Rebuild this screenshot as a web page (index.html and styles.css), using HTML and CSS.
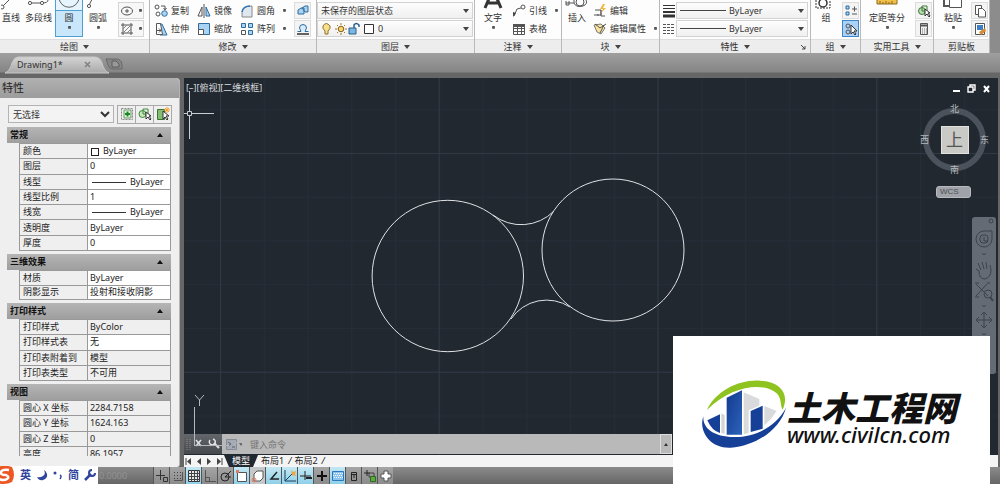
FILE: index.html
```html
<!DOCTYPE html>
<html lang="zh-CN">
<head>
<meta charset="utf-8">
<title>Drawing1</title>
<link rel="stylesheet" href="styles.css">
</head>
<body>
<div class="app">
  <header class="ribbon">
    <section class="panel panel-draw">
      <div class="panel-body">
        <button class="big big-narrow"><svg width="20" height="11" viewBox="0 0 20 11"><path d="M1 7 8 0" class="ln"/><circle cx="1" cy="7" r="2" class="nd"/></svg><span>直线</span><i></i></button>
        <button class="big big-wide"><svg width="26" height="11" viewBox="0 0 26 11"><path d="M4 3h12q6 0 6-3" class="ln"/><circle cx="4" cy="3" r="1.6" class="nd"/><circle cx="16" cy="3" r="1.6" class="nd"/></svg><span>多段线</span><i></i></button>
        <button class="big big-on"><svg width="26" height="11" viewBox="0 0 26 11"><circle cx="13" cy="-3" r="11" class="ln"/></svg><span>圆</span><i class="caret"></i></button>
        <button class="big"><svg width="26" height="11" viewBox="0 0 26 11"><path d="M4 6Q5 2 8-2" class="ln"/><circle cx="4" cy="6" r="1.6" class="nd"/></svg><span>圆弧</span><i class="caret"></i></button>
        <div class="stack stack-draw">
          <button class="split"><svg width="14" height="14" viewBox="0 0 14 14"><ellipse cx="7" cy="7" rx="5.500" ry="4" class="ln"/><path d="M5 7h4M7 5v4" class="ln"/></svg><i class="caret"></i></button>
          <button class="split"><svg width="14" height="14" viewBox="0 0 14 14"><path d="M3 1v12M11 1v12M1 3h12M1 11h12" class="ln"/><path d="M3 7l4-4M3 11l8-8M7 11l4-4" stroke="#888" fill="none"/></svg><i class="caret"></i></button>
        </div>
      </div>
      <h2 class="panel-title">绘图<i class="drop"></i></h2>
    </section>

    <section class="panel panel-modify">
      <div class="panel-body">
        <div class="stack">
          <button class="tool"><svg width="14" height="14" viewBox="0 0 14 14"><circle cx="3" cy="3" r="2" class="ln"/><circle cx="4" cy="10" r="2" class="ln"/><circle cx="10.500" cy="9.500" r="2.800" class="bl"/><path d="M7 2h4v3M9.500 4 11 6l1.500-2" class="ln"/></svg>复制</button>
          <button class="tool"><svg width="14" height="14" viewBox="0 0 14 14"><path d="M6 2h2l5 11H6z" class="bl"/><path d="M2.500 1.500h4l2 11h-6z" fill="#fff" stroke="#555"/><path d="M3 8.500h4M5 6.500l2 2-2 2" class="ln"/></svg>拉伸</button>
        </div>
        <div class="stack">
          <button class="tool"><svg width="14" height="14" viewBox="0 0 14 14"><path d="M5 3v9H1z" fill="#fff" stroke="#555"/><path d="M9 3v9h4z" class="bl"/><path d="M7 0v14" class="ln"/></svg>镜像</button>
          <button class="tool"><svg width="14" height="14" viewBox="0 0 14 14"><path d="M1.500 1.500h11v11h-11z" class="bl"/><path d="M1.500 7.500h5v5h-5z" fill="#fff" stroke="#555"/></svg>缩放</button>
        </div>
        <div class="stack">
          <button class="tool"><svg width="14" height="14" viewBox="0 0 14 14"><path d="M2 13V8q1-6 10-6v11z" fill="#dfe7ef" stroke="#888"/><path d="M2 8q1-6 8-6" stroke="#2f78b8" fill="none" stroke-width="1.500"/></svg>圆角<i class="caret"></i></button>
          <button class="tool"><svg width="14" height="14" viewBox="0 0 14 14"><path d="M1.500 1.500h4v4h-4zM8.500 1.500h4v4h-4zM8.500 8.500h4v4h-4z" class="bl"/><path d="M1.500 8.500h4v4h-4z" class="ln"/></svg>阵列<i class="caret"></i></button>
        </div>
        <div class="stack stack-end">
          <button class="mini"><svg width="14" height="14" viewBox="0 0 14 14"><path d="M2 6l3-2h3v6H2zM6 4l3-2h3v6H9z" class="bl"/></svg></button>
          <button class="mini"><svg width="14" height="14" viewBox="0 0 14 14"><path d="M1.500 9.500H5L3.500 6a3.500 3.500 0 1 1 7 0L9 9.500h3.500" fill="#d8ebfa" stroke="#2e6c9f"/><path d="M1 12h12" stroke="#333" stroke-width="1.500"/></svg></button>
        </div>
      </div>
      <h2 class="panel-title">修改<i class="drop"></i></h2>
    </section>

    <section class="panel panel-layer">
      <div class="panel-body">
        <div class="stack stack-fill">
          <button class="combo"><span>未保存的图层状态</span><i class="drop"></i></button>
          <button class="combo">
            <svg width="54" height="14" viewBox="0 0 54 14">
              <path d="M4 9Q1 6 2 4q3-5 7 0 1 2-2 5v3H4z" fill="#fbe08c" stroke="#8a7230"/>
              <circle cx="20" cy="7" r="2.800" fill="#fbd36b" stroke="#806020"/><path d="M20 1v2M20 11v2M14 7h2M24 7h2M16 3l1 1M23 10l1 1M16 11l1-1M23 4l1-1" stroke="#b07a18"/>
              <path d="M28 6h7v6h-7z" fill="#7bb7e2" stroke="#2a5f8d"/><path d="M33 6V3q2-3 5 0v2" fill="none" stroke="#2a5f8d" stroke-width="1.500"/>
              <path d="M43.500 2.500h9v9h-9z" fill="#fff" stroke="#333"/>
            </svg><span>0</span><i class="drop"></i></button>
        </div>
      </div>
      <h2 class="panel-title">图层<i class="drop"></i></h2>
    </section>

    <section class="panel panel-note">
      <div class="panel-body">
        <button class="big"><svg width="26" height="11" viewBox="0 0 26 11"><path d="M5 8 11-6h4l6 14M8 3h10" fill="none" stroke="#333" stroke-width="3"/></svg><span>文字</span><i class="caret"></i></button>
        <div class="stack">
          <button class="tool"><svg width="14" height="14" viewBox="0 0 14 14"><path d="M2 12 5 5l4-1" class="ln"/><path d="M1 13V8l3 1z" fill="#444"/><circle cx="11" cy="3" r="2" class="ln"/></svg>引线<i class="caret"></i></button>
          <button class="tool"><svg width="14" height="14" viewBox="0 0 14 14"><path d="M1.500 2.500h11v10h-11zM1.500 6.500h11M1.500 9.500h11M5.500 4v8M9.500 4v8" class="ln"/><path d="M1 2h12v3H1z" fill="#555"/></svg>表格</button>
        </div>
      </div>
      <h2 class="panel-title">注释<i class="drop"></i></h2>
    </section>

    <section class="panel panel-block">
      <div class="panel-body">
        <button class="big"><svg width="26" height="11" viewBox="0 0 26 11"><path d="M2 3h8M10 0v3q2 5 9 3 5-2 3-6M2 1v4h3V1" class="ln"/><circle cx="16" cy="2" r="4" class="ln"/></svg><span>插入</span><i></i></button>
        <div class="stack">
          <button class="tool"><svg width="14" height="14" viewBox="0 0 14 14"><path d="M2 6h6v5H4M1 11h5M8 6v6h4" class="ln"/><path d="M10 0 7 5h3L8 9l5-5h-3l2-4z" fill="#f5b63c"/></svg>编辑</button>
          <button class="tool"><svg width="14" height="14" viewBox="0 0 14 14"><path d="M1 3l7-1 4 4-4 6-4-2z" fill="#fbe3a0" stroke="#777"/><path d="M2 2l5 4 6-4M7 11l4-8" class="ln"/></svg>编辑属性<i class="caret"></i></button>
        </div>
      </div>
      <h2 class="panel-title">块<i class="drop"></i></h2>
    </section>

    <section class="panel panel-props">
      <div class="panel-body">
        <div class="stack stack-fill">
          <div class="combo-row"><svg width="12" height="14" viewBox="0 0 12 14"><path d="M0 1.500h12M0 4.500h12" stroke="#333"/><path d="M0 8h12" stroke="#333" stroke-width="2"/><path d="M0 12h12" stroke="#333" stroke-width="3"/></svg><button class="combo"><b class="rule"></b><span>ByLayer</span><i class="drop"></i></button></div>
          <div class="combo-row"><svg width="12" height="14" viewBox="0 0 12 14"><path d="M0 2.500h12M0 5.500h12M0 8.500h12M0 11.500h12" stroke="#555" stroke-dasharray="3 1"/></svg><button class="combo"><b class="rule"></b><span>ByLayer</span><i class="drop"></i></button></div>
        </div>
      </div>
      <h2 class="panel-title">特性<i class="drop"></i><svg class="launcher" width="5" height="5" viewBox="0 0 5 5"><path d="M0 0l4 4M4 1v3H1" stroke="#444" fill="none"/></svg></h2>
    </section>

    <section class="panel panel-group">
      <div class="panel-body">
        <button class="big"><svg width="26" height="11" viewBox="0 0 26 11"><path d="M3 0v8h14V0" fill="none" stroke="#333" stroke-dasharray="2 1"/><circle cx="10" cy="3" r="4" fill="none" stroke="#333" stroke-width="1.500"/></svg><span>组</span><i></i></button>
        <div class="stack stack-end">
          <button class="mini"><svg width="14" height="14" viewBox="0 0 14 14"><path d="M2 2h3v3H2zM2 8h3v3H2z" class="bl"/><path d="M8 5h5M10.500 2.500v5M8 10h5" class="ln"/></svg></button>
          <button class="mini mini-on"><svg width="14" height="14" viewBox="0 0 14 14"><circle cx="4" cy="4" r="2" class="ln"/><circle cx="4" cy="10" r="2" class="ln"/><path d="M7 3v9l2-2 2 3 1-1-2-3h3z" fill="#fff" stroke="#333"/></svg></button>
        </div>
      </div>
      <h2 class="panel-title">组<i class="drop"></i></h2>
    </section>

    <section class="panel panel-utils">
      <div class="panel-body">
        <button class="big big-util"><svg width="26" height="11" viewBox="0 0 26 11"><path d="M3-2h20v6H3z" fill="#f1bf4a" stroke="#8b6a1c"/><path d="M6 1v3M9 2v2M12 1v3M15 2v2M18 1v3" stroke="#8b6a1c"/></svg><span>定距等分</span><i class="caret"></i></button>
        <div class="stack stack-end">
          <button class="mini"><svg width="14" height="14" viewBox="0 0 14 14"><circle cx="5" cy="7" r="3.500" fill="#b9dcb0" stroke="#3b7a35"/><path d="M5 2h5v5H5z" fill="none" stroke="#3b7a35"/><path d="M8 5v7l2-2 2 3 1-1-2-3h2z" fill="#fff" stroke="#333"/></svg></button>
          <button class="mini"><svg width="14" height="14" viewBox="0 0 14 14"><path d="M3.500 1.500h7v11h-7z" fill="#eee" stroke="#555"/><path d="M4 3.500h6" stroke="#555" stroke-width="2"/><path d="M5 7h5M5 9h5M5 11h5" stroke="#777" stroke-dasharray="1 1"/></svg></button>
        </div>
      </div>
      <h2 class="panel-title">实用工具<i class="drop"></i></h2>
    </section>

    <section class="panel panel-clip">
      <div class="panel-body">
        <button class="big"><svg width="26" height="11" viewBox="0 0 26 11"><path d="M4 0v6h5" fill="none" stroke="#555" stroke-width="2"/><path d="M9.500-2h12v9.500h-12z" fill="#fff" stroke="#555"/></svg><span>粘贴</span><i class="caret"></i></button>
        <div class="stack stack-end">
          <button class="mini"><svg width="14" height="14" viewBox="0 0 14 14"><path d="M8.500 10.500h-6v-9h6z" fill="#fff" stroke="#555"/><path d="M5.500 4.500h4l3 3v5.500h-7z" fill="#fff" stroke="#555"/></svg></button>
          <button class="mini"><svg width="14" height="14" viewBox="0 0 14 14"><path d="M2.500 1.500h9v11h-9z" fill="#fff" stroke="#555"/><path d="M4 3h6v5H4z" fill="#3d7fc0"/><path d="M6 10l6-4 1 3-5 4z" fill="#d98a34"/></svg></button>
        </div>
      </div>
      <h2 class="panel-title">剪贴板</h2>
    </section>
  </header>

  <nav class="files">
    <svg class="file-shape" width="125" height="18" viewBox="0 0 125 18">
      <defs><linearGradient id="tab" x1="0" y1="0" x2="0" y2="1"><stop offset="0" stop-color="#d4d4d4"/><stop offset="1" stop-color="#a9a9a9"/></linearGradient></defs>
      <path d="M0 17Q5 15 7 7q2-6 6-6h77q5 0 7 6 2 8 7 10z" fill="url(#tab)" stroke="#c8c8c8"/>
      <path d="M101 3h10q5 0 6 5v5h-9q-4 0-5-4z" fill="#858585" stroke="#6a6a6a"/>
      <path d="M107 5h4l3 3v3h-7z" fill="#999" stroke="#5d5d5d"/>
    </svg>
    <a class="file" href="#drawing">Drawing1*</a>
    <button class="file-close" aria-label="关闭"><svg width="7" height="7" viewBox="0 0 7 7"><path d="M1 1l5 5M6 1 1 6" stroke="#808080" stroke-width="1.500"/></svg></button>
  </nav>

  <main class="work">
    <aside class="palette">
      <h1 class="palette-title">特性</h1>
      <div class="palette-body">
        <div class="picker">
          <select aria-label="选择对象"><option>无选择</option></select>
          <div class="picker-tools">
            <button><svg width="14" height="14" viewBox="0 0 14 14"><path d="M1.500 1.500h11v11h-11z" fill="none" stroke="#888" stroke-dasharray="2 1"/><path d="M4 3h7v8H4z" fill="#e0f0dc" stroke="#6a9a64"/><path d="M7.500 4.500v5M5 7h5" stroke="#188a22" stroke-width="2"/></svg></button>
            <button><svg width="14" height="14" viewBox="0 0 14 14"><circle cx="4.500" cy="7" r="3.500" fill="#c8e6c0" stroke="#3b8a35"/><path d="M5 2h5v5H5z" fill="none" stroke="#3b8a35"/><path d="M8 5v7l2-2 2 3 1-1-2-3h2z" fill="#fff" stroke="#333"/></svg></button>
            <button><svg width="14" height="14" viewBox="0 0 14 14"><path d="M1.500 2.500h7v10h-7z" fill="#82bf72" stroke="#3d7435"/><path d="M7 4v8l2-2 2 3 1-1-2-3h3z" fill="#fff" stroke="#333"/><path d="M11 0v6M8 3h6M9 1l4 4M13 1 9 5" stroke="#f0a030"/></svg></button>
          </div>
        </div>
        <div class="groups">
          <section class="group">
            <h2>常规<i></i></h2>
            <table class="rows rows-7">
              <tr><th>颜色</th><td><b class="swatch"></b>ByLayer</td></tr>
              <tr><th>图层</th><td>0</td></tr>
              <tr><th>线型</th><td><b class="dash"></b>ByLayer</td></tr>
              <tr><th>线型比例</th><td>1</td></tr>
              <tr><th>线宽</th><td><b class="dash"></b>ByLayer</td></tr>
              <tr><th>透明度</th><td>ByLayer</td></tr>
              <tr><th>厚度</th><td>0</td></tr>
            </table>
          </section>
          <section class="group">
            <h2>三维效果<i></i></h2>
            <table class="rows rows-2">
              <tr><th>材质</th><td>ByLayer</td></tr>
              <tr><th>阴影显示</th><td>投射和接收阴影</td></tr>
            </table>
          </section>
          <section class="group">
            <h2>打印样式<i></i></h2>
            <table class="rows rows-4">
              <tr><th>打印样式</th><td class="locked">ByColor</td></tr>
              <tr><th>打印样式表</th><td>无</td></tr>
              <tr><th>打印表附着到</th><td class="locked">模型</td></tr>
              <tr><th>打印表类型</th><td class="locked">不可用</td></tr>
            </table>
          </section>
          <section class="group">
            <h2>视图<i></i></h2>
            <table class="rows rows-4">
              <tr><th>圆心 X 坐标</th><td class="locked">2284.7158</td></tr>
              <tr><th>圆心 Y 坐标</th><td class="locked">1624.163</td></tr>
              <tr><th>圆心 Z 坐标</th><td class="locked">0</td></tr>
              <tr><th>高度</th><td class="locked">86.1957</td></tr>
            </table>
          </section>
        </div>
      </div>
    </aside>

    <div class="viewport">
      <div class="canvas" id="drawing">
        <svg class="scene" width="814" height="378" viewBox="184 78 814 378">
          <defs>
            <pattern id="minor" x="220" y="153" width="43.750" height="43.750" patternUnits="userSpaceOnUse"><path d="M.5 0v44M0 .5h44" stroke="#252d37"/></pattern>
            <pattern id="major" x="220" y="153" width="218.750" height="218.750" patternUnits="userSpaceOnUse"><path d="M.5 0v219M0 .5h219" stroke="#303944"/></pattern>
          </defs>
          <rect x="184" y="78" width="814" height="378" fill="url(#minor)"/>
          <rect x="184" y="78" width="814" height="378" fill="url(#major)"/>
          <g fill="none" stroke="#dfe2e5">
            <circle cx="447.800" cy="276" r="75.700"/>
            <circle cx="613" cy="250" r="71"/>
            <path d="M493 215A46 46 0 0 0 554 211"/>
            <path d="M511 319A43 43 0 0 1 570 307"/>
          </g>
          <path d="M189.500 91v20M189.500 116v23M184 113.500h3M192 113.500h22M187.500 111.500h4v4h-4z" fill="none" stroke="#c9ccd0"/>
        </svg>
        <p class="view-label">[–][俯视][二维线框]</p>
        <div class="window-buttons">
          <button aria-label="最小化"><svg width="9" height="9" viewBox="0 0 9 9"><path d="M1 7h7" stroke="#fff" stroke-width="2"/></svg></button>
          <button aria-label="还原"><svg width="9" height="9" viewBox="0 0 9 9"><path d="M3 3V1h5v5H6M1 3h5v5H1z" fill="none" stroke="#fff" stroke-width="1.400"/></svg></button>
          <button aria-label="关闭"><svg width="9" height="9" viewBox="0 0 9 9"><path d="M2 2l5 6M7 2 2 8" stroke="#fff" stroke-width="2"/></svg></button>
        </div>
        <div class="compass">
          <span>北</span>
          <div class="compass-mid"><span>西</span><b>上</b><span>东</span></div>
          <span>南</span>
        </div>
        <button class="wcs">WCS</button>
        <div class="navbar">
          <svg width="24" height="157" viewBox="0 0 24 157" fill="none" stroke="#3b424b">
            <circle cx="19" cy="4" r="2"/>
            <path d="M12 14a8 8 0 1 0 8 8v-8z"/><rect x="8" y="18" width="8" height="8" rx="3"/><path d="M12 20v4h4"/>
            <path d="M10 36l2 2 2-2M10 88l2 2 2-2M10 116l2 2 2-2"/>
            <path d="M7 54l-3-2M7 54q0 8 6 8 6-2 6-9l-1-5M9 53l-3-7M12 52l-2-7M15 52l-1-7"/>
            <path d="M4 67l12 12M15 67 4 79M3 66h4M15 66h3M3 80h4"/><circle cx="16" cy="77" r="4"/><path d="M18 80l3 4" stroke-width="2"/>
            <path d="M12 95v16M4 103h16M9 98l3-3 3 3M9 108l3 3 3-3M7 100l-3 3 3 3M17 100l3 3-3 3"/>
          </svg>
        </div>
        <div class="command">
          <div class="command-grip">
            <svg width="38" height="19" viewBox="0 0 38 19"><path d="M3 5v11M6 5v11" stroke="#888" stroke-dasharray="1 1"/><path d="M12 6l5 6M17 6l-5 6" stroke="#e4e4e4" stroke-width="1.500"/><path d="M30 9l5 5" stroke="#e4e4e4" stroke-width="2"/><path d="M26 6a3 3 0 1 0 3-1" fill="none" stroke="#e4e4e4" stroke-width="1.500"/></svg>
          </div>
          <svg width="24" height="19" viewBox="0 0 24 19"><path d="M4.500 4.500h10v10h-10z" fill="#a5aab4" stroke="#858b96"/><path d="M6 7l3 2-3 2M10 12h3" fill="none" stroke="#59616d"/><path d="M17 8h4l-2 3z" fill="#666"/></svg>
          <input aria-label="命令" placeholder="键入命令">
          <button aria-label="历史"><i></i></button>
        </div>
        <svg class="ucs" width="60" height="62" viewBox="0 0 60 62"><path d="M10.500 15v38M10 53.500h35M11 3l4.500 5v6M20 3l-4.500 5M50 44l10 9M60 44l-10 9" fill="none" stroke="#b5b8bc"/></svg>
      </div>
      <nav class="layouts">
        <button aria-label="首个"><svg width="10" height="9" viewBox="0 0 10 9"><path d="M2 1v7" stroke="#444"/><path d="M7 1v7L3 4.500z" fill="#444"/></svg></button>
        <button aria-label="上一个"><svg width="10" height="9" viewBox="0 0 10 9"><path d="M7 1v7L3 4.500z" fill="#444"/></svg></button>
        <button aria-label="下一个"><svg width="10" height="9" viewBox="0 0 10 9"><path d="M3 1v7l4-3.500z" fill="#444"/></svg></button>
        <button aria-label="末个"><svg width="10" height="9" viewBox="0 0 10 9"><path d="M3 1v7l4-3.500z" fill="#444"/><path d="M8 1v7" stroke="#444"/></svg></button>
        <a class="layout layout-on" href="#model">模型</a>
        <a class="layout" href="#l1">布局1</a><i>/</i>
        <a class="layout" href="#l2">布局2</a><i>/</i>
      </nav>
    </div>
  </main>

  <footer class="status">
    <span class="coords">0.0000</span>
    <div class="toggles">
      <button><svg width="14" height="14" viewBox="0 0 14 14"><path d="M5.500 1v10M1 6.500h9" stroke="#333"/><path d="M8.500 8.500h4v4h-4z" fill="none" stroke="#333"/></svg></button>
      <button><svg width="14" height="14" viewBox="0 0 14 14"><path d="M3 3.500h8M3 6.500h8M3 9.500h8" stroke="#444" stroke-dasharray="1 2"/><path d="M11.500 3v8.500H3" class="ln"/></svg></button>
      <button class="on"><svg width="14" height="14" viewBox="0 0 14 14"><path d="M1.500 1.500h11v11h-11z" fill="#e4e8ea" stroke="#333"/><path d="M4.500 1v12M7.500 1v12M10.500 1v12M1 4.500h12M1 7.500h12M1 10.500h12" stroke="#444"/></svg></button>
      <button><svg width="14" height="14" viewBox="0 0 14 14"><path d="M2.500 1v11.500H13M2 8.500h4.500v4" class="ln"/></svg></button>
      <button><svg width="14" height="14" viewBox="0 0 14 14"><circle cx="6" cy="8" r="4" fill="none" stroke="#222"/><path d="M6 8l6-6M6 8h6" stroke="#222"/></svg></button>
      <button class="on"><svg width="14" height="14" viewBox="0 0 14 14"><path d="M2.500 3.500h9v9h-9z" fill="#fff" stroke="#555"/><path d="M1 1h3v3H1z" fill="#e07a60"/></svg></button>
      <button class="soft"><svg width="14" height="14" viewBox="0 0 14 14"><path d="M3 5l3-3h6v7l-3 3H3z" fill="#fff" stroke="#555"/><circle cx="3" cy="11" r="2" fill="none" stroke="#e07a60"/></svg></button>
      <button class="on"><svg width="14" height="14" viewBox="0 0 14 14"><path d="M10 3 4 10h8" fill="none" stroke="#222" stroke-width="1.500"/></svg></button>
      <button class="on"><svg width="14" height="14" viewBox="0 0 14 14"><path d="M2 1v11h11M2 12l8-8" fill="none" stroke="#1a3e5d"/><path d="M8 1l2 2 3-1-1 3 1 2-4-1z" fill="#f2a33a"/></svg></button>
      <button class="on"><svg width="14" height="14" viewBox="0 0 14 14"><path d="M6 2v9M1 7h11" stroke="#222"/><path d="M7 8h6v2H7z" fill="#222"/></svg></button>
      <button><svg width="14" height="14" viewBox="0 0 14 14"><path d="M7 2v10M2 7h10" stroke="#111" stroke-width="2"/></svg></button>
      <button class="on"><svg width="14" height="14" viewBox="0 0 14 14"><path d="M1.500 2.500h11v9h-11z" fill="#8dc4ef" stroke="#2b78be"/><path d="M3 4.500h9M2 6.500h10M3 8.500h9" stroke="#fff" stroke-dasharray="1 1"/></svg></button>
      <button><svg width="14" height="14" viewBox="0 0 14 14"><path d="M4.500 3.500h5v8h-5z" fill="none" stroke="#222"/><path d="M5 5.500h4M7 6v3" stroke="#222"/></svg></button>
      <button><svg width="14" height="14" viewBox="0 0 14 14"><path d="M1 4h6M4 1v6" stroke="#222"/><path d="M6 4h5v4H6z" fill="none" stroke="#444"/><path d="M7.500 7.500h5v5h-5z" fill="#5daa45" stroke="#2d6a1e"/></svg></button>
      <button><svg width="14" height="14" viewBox="0 0 14 14"><path d="M5 2h4v3h3v4H9v3H5V9H2V5h3z" fill="#fff" stroke="#555"/></svg></button>
    </div>
  </footer>

  <div class="ime">
    <svg width="15" height="18" viewBox="0 0 15 18"><path d="M-6 2Q4-2 12 1q4 8 0 15Q4 20-6 16z" fill="#ec5723"/><path d="M9 4Q2 3 1 6t5 3q4 2 1 4t-8 0" fill="none" stroke="#fff" stroke-width="2.500"/></svg>
    <span>英</span>
    <svg width="12" height="12" viewBox="0 0 12 12"><path d="M8 1q2 4-1 6-3 2-6 1 2 4 6 3 5-2 4-6-1-3-3-4z" fill="#30449c"/></svg>
    <svg width="10" height="12" viewBox="0 0 10 12"><circle cx="2" cy="4" r="1.500" fill="#30449c"/><path d="M7 6q2 1 0 4" fill="none" stroke="#30449c" stroke-width="1.500"/></svg>
    <span>简</span>
    <svg width="12" height="12" viewBox="0 0 12 12"><path d="M1 11l6-6" stroke="#30449c" stroke-width="2.500"/><path d="M8 1a3 3 0 1 0 3 3" fill="none" stroke="#30449c" stroke-width="2"/></svg>
  </div>

  <div class="brand">
    <svg width="85" height="69" viewBox="126 150 255 207">
      <defs><linearGradient id="tower" x1="0" y1="0" x2="1" y2="1"><stop offset="0" stop-color="#123a91"/><stop offset="1" stop-color="#2d63b8"/></linearGradient></defs>
      <path d="M141 240C165 185 235 148 300 152 360 156 390 190 368 239 360 228 366 205 350 190 318 158 220 160 141 240z" fill="#8fc31f"/>
      <path d="M130 259C115 300 148 356 212 353 285 349 360 300 378 233 348 290 285 322 222 321 158 320 128 293 130 259z" fill="#163f98"/>
      <path d="M142 271l38-18v56q-24-6-38-38z" fill="#163f98"/><path d="M184 250l10 6v55l-10-2z" fill="#d3d4d6"/>
      <path d="M200 203l46-22v133h-46z" fill="url(#tower)"/>
      <path d="M251 187l47 20v20l-32 14v68l-15 4z" fill="#d9dadc"/>
      <path d="M272 243l36-16v69l-36 10z" fill="#163f98"/><path d="M313 228l37 15q-15 25-37 43z" fill="#d9dadc"/>
    </svg>
    <div class="brand-text"><strong>土木工程网</strong><a href="#site">www.civilcn.com</a></div>
  </div>
</div>
</body>
</html>
```
FILE: styles.css
```css
*, *::before { box-sizing: border-box; }
body { margin: 0; font: 9px/12px "Noto Sans", "Noto Sans CJK SC", sans-serif; color: #333; }
button, input, select { font: inherit; color: inherit; margin: 0; padding: 0; border: 0; background: none; }
h1, h2, p { margin: 0; font-size: inherit; font-weight: normal; }
a { color: inherit; text-decoration: none; }
svg { display: block; flex: none; }
.ln { fill: none; stroke: #555; }
.nd { fill: #fff; stroke: #555; }
.bl { fill: #a9d3f2; stroke: #2e6c9f; }

.app { position: relative; display: flex; flex-direction: column; height: 100vh; overflow: hidden; background: #8f8f8f; }

/* Ribbon */
.ribbon { display: flex; flex: none; padding-right: 10px; background: #8c8c8c; }
.panel { display: flex; flex-direction: column; min-width: 0; background: #fdfdfd; border-right: 1px solid #b9b9b9; }
.panel-draw { flex: 1 1 150px; }
.panel-modify { flex: 1 1 167px; }
.panel-layer { flex: 1 1 158px; }
.panel-note { flex: 1 1 87px; }
.panel-block { flex: 1 1 98px; }
.panel-props { flex: 1 1 151px; }
.panel-group { flex: 1 1 50px; }
.panel-utils { flex: 1 1 73px; }
.panel-clip { flex: 1 1 56px; }
.panel-body { display: flex; align-items: flex-end; height: 39px; padding: 0 1px 2px 0; overflow: hidden; }
.panel-title { display: flex; align-items: center; justify-content: center; gap: 5px; height: 14px; background: #ededed; border-top: 1px solid #dedede; position: relative; white-space: nowrap; }
.panel-modify .panel-body { padding-left: 4px; padding-right: 5px; gap: 8px; }
.panel-note .panel-body { padding-left: 3px; gap: 4px; }
.panel-block .panel-body { gap: 1px; }
.panel-utils .panel-body { padding-left: 6px; }
.panel-clip .panel-body { padding-left: 4px; }
.panel-props .panel-body { padding-left: 3px; padding-right: 2px; }
.launcher { position: absolute; right: 4px; bottom: 3px; }
.big { display: flex; flex-direction: column; align-items: center; flex: none; width: 30px; height: 37px; white-space: nowrap; overflow: hidden; border: 1px solid transparent; border-width: 0 1px; }
.big span { height: 13px; line-height: 13px; }
.big i { margin-top: 2px; }
.big-narrow { width: 22px; }
.big-wide { width: 33px; }
.big-util { width: 40px; }
.big-on { width: 28px; background: #c9e7fb; border: 1px solid #4f9fd0; border-top: 0; }
.big-on svg { background: #e6f4fd; border-bottom: 1px solid #4f9fd0; }
.caret { width: 3px; height: 3px; background: linear-gradient(#444, #777); border-radius: 1px; flex: none; }
.drop { width: 0; height: 0; border: 3px solid transparent; border-top: 4px solid #444; border-bottom: 0; flex: none; }
.stack { display: flex; flex-direction: column; gap: 1px; height: 35px; }
.stack-draw { margin-left: 5px; }
.stack-end { margin-left: auto; }
.stack-fill { flex: 1; }
.tool { display: flex; align-items: center; gap: 3px; height: 17px; white-space: nowrap; }
.tool .caret { margin-left: 5px; }
.mini { display: flex; align-items: center; justify-content: center; width: 17px; height: 17px; background: #f4f4f4; border: 1px solid #dcdcdc; }
.mini-on { background: #a9d2f6; border-color: #3e86c6; }
.split { display: flex; align-items: center; gap: 5px; width: 26px; height: 17px; padding-left: 1px; background: #f7f7f7; border: 1px solid #d5d5d5; }
.combo { display: flex; align-items: center; gap: 3px; flex: 1; height: 17px; min-height: 17px; padding: 0 3px; background: linear-gradient(#fdfdfd, #f0f0f0); border: 1px solid #d3d3d3; white-space: nowrap; }
.combo .drop { margin-left: auto; }
.combo-row { display: flex; align-items: center; gap: 1px; height: 17px; }
.rule { width: 46px; height: 1px; background: #444; }

/* File tabs */
.files { display: flex; align-items: center; flex: none; height: 25px; padding: 0 0 2px 17px; background: linear-gradient(#9f9f9f, #858585 19px, #666 20px, #666); position: relative; }
.file-shape { position: absolute; left: 5px; top: 3px; }
.file, .file-close { position: relative; }
.file { width: 67px; }

/* Work area */
.work { display: flex; flex: 1; min-height: 0; background: #666; }
.palette { display: flex; flex-direction: column; flex: none; width: 180px; background: #efefef; border-right: 1px solid #b5b5b5; border-radius: 0 4px 3px 0; overflow: hidden; }
.palette-title { flex: none; height: 20px; padding-left: 2px; font-size: 11px; line-height: 20px; color: #222; background: linear-gradient(#b1b1b1, #9c9c9c); }
.palette-body { display: flex; flex-direction: column; flex: 1; min-height: 0; padding: 6px 8px 11px 7px; }
.picker { display: flex; align-items: center; gap: 3px; height: 20px; margin-bottom: 3px; flex: none; }
.picker select { flex: 1; height: 18px; margin-left: 1px; background: #f3f3f3; border: 1px solid #b3b3b3; }
.picker-tools { display: flex; }
.picker-tools button { display: flex; align-items: center; justify-content: center; width: 19px; height: 19px; border: 1px solid #a9a9a9; margin-right: -1px; }
.groups { flex: 1; min-height: 0; overflow: hidden; display: flex; flex-direction: column; gap: 3px; }
.group { flex: none; }
.group h2 { display: flex; align-items: center; justify-content: space-between; height: 16px; padding: 0 8px 0 3px; font-weight: bold; color: #111; background: linear-gradient(#b5b5b5, #9e9e9e); }
.group h2 i { border: 3px solid transparent; border-bottom: 4px solid #111; border-top: 0; }
.rows { width: calc(100% - 12px); margin-left: 12px; border-collapse: collapse; table-layout: fixed; color: #222; }
.rows-7 { height: 108px; }
.rows-2 { height: 30px; }
.rows-4 { height: 62px; }
.rows th, .rows td { padding: 0 0 0 2px; border: 1px solid #999; text-align: left; font-weight: normal; white-space: nowrap; line-height: 12px; }
.rows th { width: 45%; padding-left: 3px; background: #efefef; }
.rows td { background: #fff; }
.rows .locked { background: #efefef; }
.swatch { display: inline-block; width: 8px; height: 8px; margin: 0 4px 0 1px; border: 1px solid #222; vertical-align: middle; }
.dash { display: inline-block; width: 34px; height: 1px; margin: 0 4px 0 2px; background: #333; vertical-align: middle; }

/* Drawing */
.viewport { display: flex; flex-direction: column; flex: 1; min-width: 0; margin: 0 2px 0 4px; }
.canvas { position: relative; flex: 1; min-height: 0; overflow: hidden; background: #212830; }
.scene { position: absolute; left: 0; top: 0; }
.view-label { position: absolute; left: 2px; top: 4px; color: #d9dcdf; }
.window-buttons { position: absolute; right: 7px; top: 6px; display: flex; gap: 6px; }
.compass { position: absolute; right: 9px; top: 25px; width: 69px; height: 73px; display: flex; flex-direction: column; align-items: center; justify-content: space-between; color: #b5b9bd; }
.compass::before { content: ""; position: absolute; left: 3px; top: 5px; width: 63px; height: 63px; border: 6px solid #4b525b; border-radius: 50%; }
.compass span { position: relative; }
.compass-mid { display: flex; align-items: center; justify-content: space-between; width: 100%; }
.compass b { position: relative; width: 28px; height: 28px; background: #c9c9c6; border: 1px solid #e2e2df; font-size: 17px; line-height: 26px; font-weight: normal; text-align: center; color: #555; }
.wcs { position: absolute; right: 27px; top: 108px; width: 35px; height: 12px; padding-left: 3px; background: #9fa2a8; border: 1px solid #b8babf; border-radius: 3px; text-align: left; font: 8px/10px "Liberation Sans", sans-serif; color: #4c5056; }
.navbar { position: absolute; right: 2px; top: 139px; background: #656b74; border-radius: 3px; }
.command { position: absolute; left: 0; right: 326px; bottom: 1px; height: 20px; display: flex; align-items: center; background: #b9b9b9; }
.command-grip { height: 20px; background: linear-gradient(#63676b, #45494e); }
.command input { flex: 1; min-width: 0; height: 18px; padding-left: 4px; }
.command input::placeholder { color: #777; opacity: 1; }
.command button { width: 12px; height: 20px; display: flex; align-items: center; justify-content: center; border: 1px solid #ddd; }
.command button i { border: 2px solid transparent; border-bottom: 3px solid #333; border-top: 0; }
.ucs { position: absolute; left: 0; bottom: 1px; }
.layouts { display: flex; align-items: center; flex: none; height: 12px; background: #f4f4f4; color: #222; }
.layouts button { width: 10px; height: 12px; display: flex; align-items: center; }
.layout { padding: 0 4px 0 3px; line-height: 12px; }
.layout-on { padding: 0 8px; background: #212830; color: #fff; clip-path: polygon(0 0, 100% 0, calc(100% - 5px) 100%, 5px 100%); }

/* Status bar */
.status { display: flex; flex: none; height: 17px; padding-left: 99px; background: linear-gradient(#8b8b8b, #666); }
.coords { width: 54px; line-height: 17px; color: #939393; }
.toggles { display: flex; }
.toggles button { display: flex; align-items: center; justify-content: center; width: 16px; height: 17px; border-left: 1px solid #555; background: linear-gradient(#a5a5a5, #8b8b8b); }
.toggles .on { background: linear-gradient(#c4e8f4, #8fd0e8); }
.toggles .soft { background: #c4c8ca; }

/* Overlays */
.ime { position: absolute; left: 0; bottom: 0; display: flex; align-items: center; gap: 5px; width: 98px; height: 18px; background: #fff; color: #30449c; font-size: 11px; line-height: 18px; font-weight: bold; }
.brand { position: absolute; right: 10px; bottom: 0; width: 317px; height: 148px; display: flex; align-items: center; padding: 9px 0 0 29px; background: #fff; }
.brand-text { display: flex; flex-direction: column; padding-top: 8px; color: #111; white-space: nowrap; }
.brand strong { font: italic 900 34px/31px "Noto Sans CJK SC", sans-serif; }
.brand a { font-size: 22px; line-height: 24px; font-weight: 500; font-style: italic; }
```
